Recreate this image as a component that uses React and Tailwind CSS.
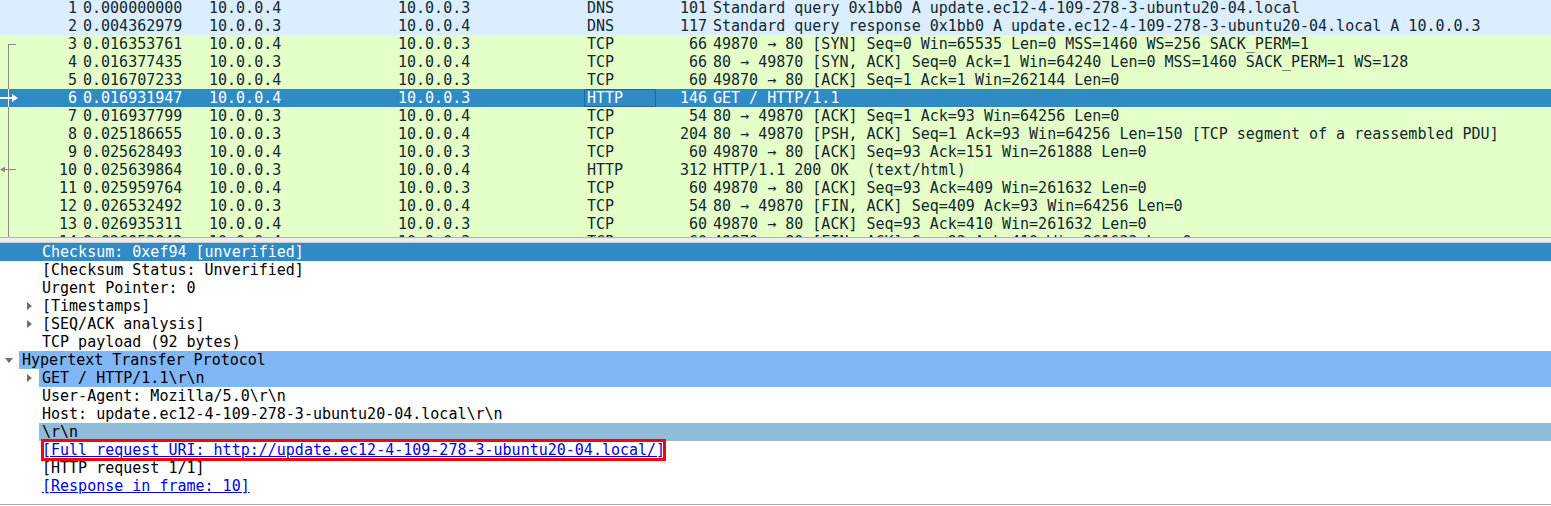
import React from "react";

const packets = [
  ["1", "0.000000000", "10.0.0.4", "10.0.0.3", "DNS", "101", "Standard query 0x1bb0 A update.ec12-4-109-278-3-ubuntu20-04.local", "dns"],
  ["2", "0.004362979", "10.0.0.3", "10.0.0.4", "DNS", "117", "Standard query response 0x1bb0 A update.ec12-4-109-278-3-ubuntu20-04.local A 10.0.0.3", "dns"],
  ["3", "0.016353761", "10.0.0.4", "10.0.0.3", "TCP", "66", "49870 → 80 [SYN] Seq=0 Win=65535 Len=0 MSS=1460 WS=256 SACK_PERM=1", "tcp"],
  ["4", "0.016377435", "10.0.0.3", "10.0.0.4", "TCP", "66", "80 → 49870 [SYN, ACK] Seq=0 Ack=1 Win=64240 Len=0 MSS=1460 SACK_PERM=1 WS=128", "tcp"],
  ["5", "0.016707233", "10.0.0.4", "10.0.0.3", "TCP", "60", "49870 → 80 [ACK] Seq=1 Ack=1 Win=262144 Len=0", "tcp"],
  ["6", "0.016931947", "10.0.0.4", "10.0.0.3", "HTTP", "146", "GET / HTTP/1.1", "sel"],
  ["7", "0.016937799", "10.0.0.3", "10.0.0.4", "TCP", "54", "80 → 49870 [ACK] Seq=1 Ack=93 Win=64256 Len=0", "tcp"],
  ["8", "0.025186655", "10.0.0.3", "10.0.0.4", "TCP", "204", "80 → 49870 [PSH, ACK] Seq=1 Ack=93 Win=64256 Len=150 [TCP segment of a reassembled PDU]", "tcp"],
  ["9", "0.025628493", "10.0.0.4", "10.0.0.3", "TCP", "60", "49870 → 80 [ACK] Seq=93 Ack=151 Win=261888 Len=0", "tcp"],
  ["10", "0.025639864", "10.0.0.3", "10.0.0.4", "HTTP", "312", "HTTP/1.1 200 OK  (text/html)", "tcp"],
  ["11", "0.025959764", "10.0.0.4", "10.0.0.3", "TCP", "60", "49870 → 80 [ACK] Seq=93 Ack=409 Win=261632 Len=0", "tcp"],
  ["12", "0.026532492", "10.0.0.3", "10.0.0.4", "TCP", "54", "80 → 49870 [FIN, ACK] Seq=409 Ack=93 Win=64256 Len=0", "tcp"],
  ["13", "0.026935311", "10.0.0.4", "10.0.0.3", "TCP", "60", "49870 → 80 [ACK] Seq=93 Ack=410 Win=261632 Len=0", "tcp"],
  ["14", "0.026953842", "10.0.0.4", "10.0.0.3", "TCP", "60", "49870 → 80 [FIN, ACK] Seq=93 Ack=410 Win=261632 Len=0", "tcp"],
];

function PacketRow({ p }) {
  const [no, time, src, dst, proto, len, info, kind] = p;
  const rowCls =
    kind === "sel"
      ? "bg-[#308ac6] text-white"
      : kind === "dns"
      ? "bg-[#daeeff] text-[#12272e]"
      : "bg-[#e4ffc7] text-[#12272e]";
  return (
    <div className={`flex h-[18px] leading-[18px] whitespace-pre ${rowCls}`}>
      <div className="w-[80px] shrink-0 text-right pr-[3px]">{no}</div>
      <div className="w-[126px] shrink-0 pl-[3px]">{time}</div>
      <div className="w-[189px] shrink-0 pl-[3px]">{src}</div>
      <div className="w-[189px] shrink-0 pl-[3px]">{dst}</div>
      <div
        className={`w-[72px] shrink-0 ${
          kind === "sel" ? "border border-[#23689a] leading-[16px] pl-[2px]" : "pl-[3px]"
        }`}
      >
        {proto}
      </div>
      <div className="w-[54px] shrink-0 text-right pr-[3px]">{len}</div>
      <div className="flex-1 pl-[3px]">{info}</div>
    </div>
  );
}

function RightTri() {
  return (
    <svg width="5" height="8" viewBox="0 0 5 8" className="block">
      <polygon points="0,0 5,4 0,8" fill="#6e6e6e" />
    </svg>
  );
}

function DownTri() {
  return (
    <svg width="8" height="5" viewBox="0 0 8 5" className="block">
      <polygon points="0,0 8,0 4,5" fill="#6e6e6e" />
    </svg>
  );
}

function TreeRow({ level = 2, expander, bg = "", full = "", children, textCls = "text-black" }) {
  const indent = level === 1 ? "w-[19px]" : "w-[39px]";
  return (
    <div className={`flex h-[18px] leading-[18px] whitespace-pre ${full}`}>
      <div className={`${indent} shrink-0 flex items-center`}>
        {expander === "right" && (
          <div className="ml-[27px]">
            <RightTri />
          </div>
        )}
        {expander === "down" && (
          <div className="ml-[5px]">
            <DownTri />
          </div>
        )}
      </div>
      <div className={`flex-1 pl-[3px] ${bg} ${textCls}`}>{children}</div>
    </div>
  );
}

export default function App() {
  return (
    <div
      className="w-[1551px] h-[506px] overflow-hidden bg-white text-[15px]"
      style={{ fontFamily: '"DejaVu Sans Mono", "Liberation Mono", monospace' }}
    >
      {/* Packet list */}
      <div className="relative h-[237px] overflow-hidden">
        <div className="-mt-px">
          {packets.map((p) => (
            <PacketRow key={p[0]} p={p} />
          ))}
        </div>
        <svg
          className="absolute left-0 top-0 pointer-events-none"
          width="20"
          height="237"
          viewBox="0 0 20 237"
        >
          <rect x="8" y="44" width="8" height="1" fill="#8a8a8a" />
          <rect x="8" y="44" width="1" height="45" fill="#8a8a8a" />
          <rect x="8" y="89" width="1" height="18" fill="#ffffff" />
          <rect x="0" y="97" width="13" height="2" fill="#ffffff" />
          <polygon points="12,94 18,98 12,102" fill="#ffffff" />
          <rect x="8" y="107" width="1" height="130" fill="#8a8a8a" />
          <rect x="3" y="169" width="13" height="1" fill="#8a8a8a" />
          <polygon points="0,169.5 5,166.5 5,172.5" fill="#8a8a8a" />
        </svg>
      </div>

      {/* Splitter */}
      <div className="h-[6px] bg-[#ececec] border-t border-b border-t-[#b3b3b3] border-b-[#cfcfcf]" />

      {/* Packet details */}
      <div className="h-[262px] border-b border-[#a9a9a9] overflow-hidden">
        <TreeRow full="bg-[#308ac6]" textCls="text-white">
          Checksum: 0xef94 [unverified]
        </TreeRow>
        <TreeRow>[Checksum Status: Unverified]</TreeRow>
        <TreeRow>Urgent Pointer: 0</TreeRow>
        <TreeRow expander="right">[Timestamps]</TreeRow>
        <TreeRow expander="right">[SEQ/ACK analysis]</TreeRow>
        <TreeRow>TCP payload (92 bytes)</TreeRow>
        <TreeRow level={1} expander="down" bg="bg-[#80b6f6]">
          Hypertext Transfer Protocol
        </TreeRow>
        <TreeRow expander="right" bg="bg-[#80b6f6]">
          GET / HTTP/1.1\r\n
        </TreeRow>
        <TreeRow>User-Agent: Mozilla/5.0\r\n</TreeRow>
        <TreeRow>Host: update.ec12-4-109-278-3-ubuntu20-04.local\r\n</TreeRow>
        <TreeRow bg="bg-[#8fbcd9]">\r\n</TreeRow>
        <TreeRow textCls="text-[#0000ee]">
          <span className="relative inline-block underline">
            [Full request URI: http://update.ec12-4-109-278-3-ubuntu20-04.local/]
            <span className="absolute -top-[2px] -bottom-[2px] -left-[1px] -right-[1px] border-[3px] border-[#ff0000]" />
          </span>
        </TreeRow>
        <TreeRow>[HTTP request 1/1]</TreeRow>
        <TreeRow textCls="text-[#0000ee] underline">[Response in frame: 10]</TreeRow>
      </div>
    </div>
  );
}
